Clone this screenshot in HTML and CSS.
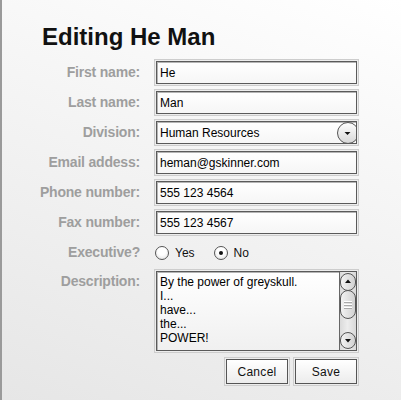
FILE: index.html
```html
<!DOCTYPE html>
<html>
<head>
<meta charset="utf-8">
<link rel="stylesheet" href="styles.css">
</head>
<body>
<div class="page">
  <h1 class="title">Editing He Man</h1>
  <div class="form">
    <label class="lbl">First name:</label>
    <div class="field"><span class="val">He</span></div>

    <label class="lbl">Last name:</label>
    <div class="field"><span class="val">Man</span></div>

    <label class="lbl">Division:</label>
    <div class="field select"><span class="val">Human Resources</span>
      <svg class="drop" width="22" height="23" viewBox="0 0 22 23">
        <defs>
          <linearGradient id="dg" x1="0" y1="0" x2="0" y2="1">
            <stop offset="0" stop-color="#ffffff"/>
            <stop offset="1" stop-color="#d6d6d6"/>
          </linearGradient>
        </defs>
        <circle cx="13" cy="11" r="10.5" fill="url(#dg)" stroke="#555" stroke-width="1"/>
        <path d="M9.5 10 L15.5 10 L12.5 13 Z" fill="#111"/>
      </svg>
    </div>

    <label class="lbl">Email addess:</label>
    <div class="field"><span class="val">heman@gskinner.com</span></div>

    <label class="lbl">Phone number:</label>
    <div class="field"><span class="val">555 123 4564</span></div>

    <label class="lbl">Fax number:</label>
    <div class="field"><span class="val">555 123 4567</span></div>

    <label class="lbl">Executive?</label>
    <div class="radios">
      <span class="radio"><span class="dot"></span>Yes</span>
      <span class="radio on"><span class="dot"></span>No</span>
    </div>

    <label class="lbl top">Description:</label>
    <div class="area">
      <div class="area-text">By the power of greyskull.<br>I...<br>have...<br>the...<br>POWER!</div>
      <svg class="scroll" width="17" height="78" viewBox="0 0 17 78">
        <defs>
          <linearGradient id="tg" x1="0" y1="0" x2="1" y2="0">
            <stop offset="0" stop-color="#d8d8d8"/>
            <stop offset="0.5" stop-color="#ededed"/>
            <stop offset="1" stop-color="#d8d8d8"/>
          </linearGradient>
          <linearGradient id="bg" x1="0" y1="0" x2="1" y2="0">
            <stop offset="0" stop-color="#f4f4f4"/>
            <stop offset="1" stop-color="#d0d0d0"/>
          </linearGradient>
        </defs>
        <rect x="0" y="0" width="17" height="78" fill="url(#tg)"/>
        <line x1="0.5" y1="0" x2="0.5" y2="78" stroke="#666"/>
        <rect x="1.5" y="1.5" width="15" height="17" rx="7.5" fill="url(#bg)" stroke="#555"/>
        <path d="M6 11 L12 11 L9 7.5 Z" fill="#111"/>
        <rect x="1.5" y="18.5" width="15" height="28" rx="7.5" fill="url(#bg)" stroke="#555"/>
        <line x1="5" y1="29.5" x2="13" y2="29.5" stroke="#fff"/>
        <line x1="5" y1="30.5" x2="13" y2="30.5" stroke="#aaa"/>
        <line x1="5" y1="32.5" x2="13" y2="32.5" stroke="#fff"/>
        <line x1="5" y1="33.5" x2="13" y2="33.5" stroke="#aaa"/>
        <line x1="5" y1="35.5" x2="13" y2="35.5" stroke="#fff"/>
        <line x1="5" y1="36.5" x2="13" y2="36.5" stroke="#aaa"/>
        <rect x="1.5" y="60.5" width="15" height="16" rx="7.5" fill="url(#bg)" stroke="#555"/>
        <path d="M6 67 L12 67 L9 70.5 Z" fill="#111"/>
      </svg>
    </div>

    <div class="buttons">
      <button class="btn">Cancel</button>
      <button class="btn">Save</button>
    </div>
  </div>
</div>
</body>
</html>
```

FILE: styles.css
```css
html, body {
  margin: 0;
  padding: 0;
}
body {
  width: 401px;
  height: 400px;
  overflow: hidden;
  font-family: "Liberation Sans", Arial, sans-serif;
}
.page {
  box-sizing: border-box;
  width: 401px;
  height: 400px;
  border-left: 2px solid #9a9a9a;
  background: linear-gradient(200deg, #ffffff 0%, #f6f6f6 35%, #e6e6e6 100%);
  padding-top: 23px;
}
.title {
  margin: 0 0 10px 40px;
  font-size: 24px;
  line-height: 28px;
  font-weight: bold;
  color: #111;
}
.form {
  display: grid;
  grid-template-columns: 138px 201px;
  column-gap: 16px;
  row-gap: 7px;
  align-items: start;
}
.lbl {
  grid-column: 1;
  text-align: right;
  font-size: 14px;
  letter-spacing: -0.2px;
  font-weight: bold;
  color: #9e9e9e;
  line-height: 23px;
}
.lbl.top {
  line-height: 20px;
}
.field {
  grid-column: 2;
  box-sizing: border-box;
  height: 23px;
  border: 1px solid #5a5a5a;
  background: linear-gradient(#ffffff, #f6f6f6);
  box-shadow: inset 1px 1px 0 #b5b5b5, 0 0 0 1px #ededed, 0 0 0 2px #cdcdcd;
  display: flex;
  align-items: center;
  padding-left: 3px;
  font-size: 12px;
  color: #000;
  position: relative;
}
.select {
  overflow: hidden;
}
.drop {
  position: absolute;
  right: -1px;
  top: 0px;
}
.radios {
  grid-column: 2;
  height: 23px;
  display: flex;
  align-items: center;
  font-size: 12px;
  color: #111;
  margin-left: -1px;
}
.radio {
  display: flex;
  align-items: center;
  margin-right: 19px;
}
.dot {
  box-sizing: border-box;
  width: 14px;
  height: 14px;
  border-radius: 50%;
  border: 1px solid #555;
  background: radial-gradient(circle at 50% 35%, #ffffff 40%, #dcdcdc 100%);
  margin-right: 6px;
  display: flex;
  align-items: center;
  justify-content: center;
}
.radio.on .dot::after {
  content: "";
  width: 4px;
  height: 4px;
  border-radius: 50%;
  background: #111;
}
.area {
  grid-column: 2;
  box-sizing: border-box;
  height: 80px;
  border: 1px solid #5a5a5a;
  background: linear-gradient(#ffffff, #f0f0f0);
  box-shadow: inset 1px 1px 0 #b5b5b5, 0 0 0 1px #ededed, 0 0 0 2px #cdcdcd;
  display: flex;
  justify-content: space-between;
}
.area-text {
  padding: 3px 0 0 3px;
  font-size: 12px;
  line-height: 14px;
  color: #000;
}
.scroll {
  flex: none;
  display: block;
}
.buttons {
  grid-column: 2;
  margin-top: 1px;
  display: flex;
  justify-content: flex-end;
  gap: 7px;
  height: 25px;
}
.btn {
  box-sizing: border-box;
  width: 62px;
  height: 25px;
  margin: 0;
  padding: 0;
  border: 1px solid #555;
  border-radius: 0;
  background: linear-gradient(#ffffff, #ececec);
  box-shadow: 0 0 0 1px #ededed, 0 0 0 2px #cdcdcd;
  font-family: "Liberation Sans", Arial, sans-serif;
  font-size: 12px;
  color: #111;
  letter-spacing: 0.3px;
}
```
